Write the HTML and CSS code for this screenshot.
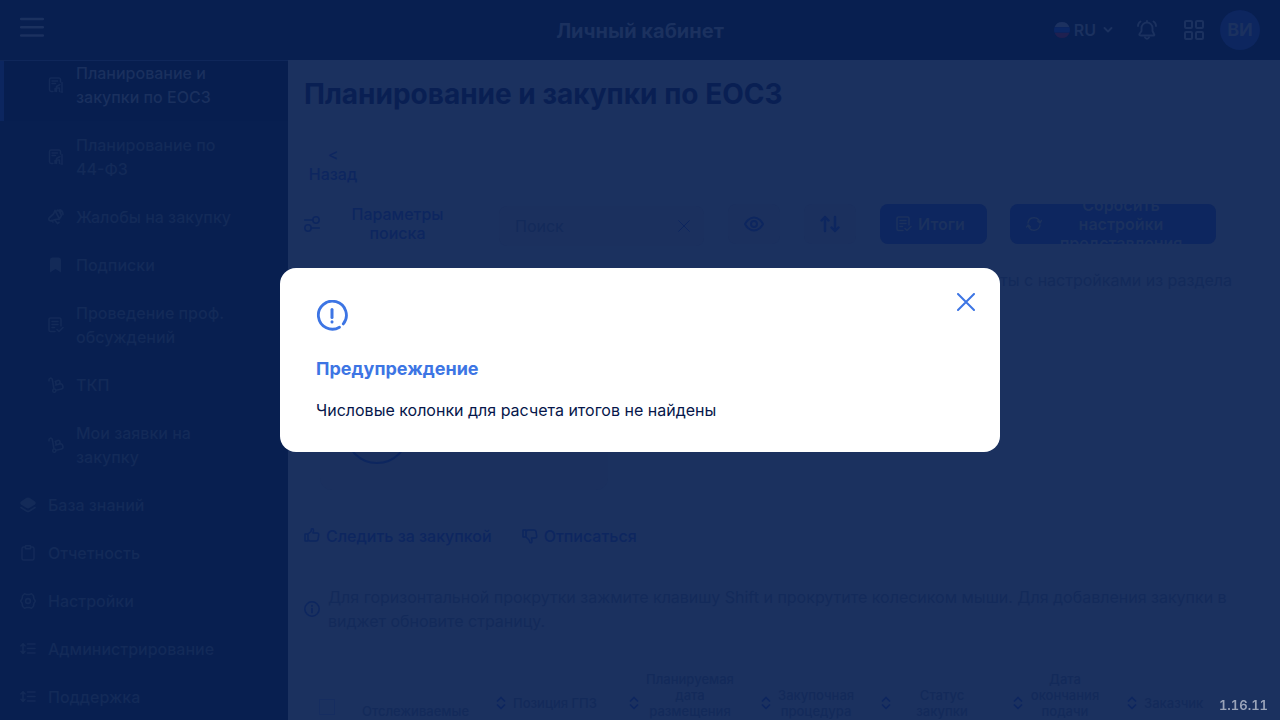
FILE: index.html
```html
<!DOCTYPE html>
<html lang="ru">
<head>
<meta charset="utf-8">
<meta name="viewport" content="width=device-width, initial-scale=1">
<title>Личный кабинет</title>
<link rel="stylesheet" href="styles.css">
</head>
<body>
<svg class="sprite" aria-hidden="true">
  <symbol id="i-plan" viewBox="0 0 16 16"><path d="M5 14.500H3A1.700 1.700 0 0 1 1.500 13V2.500A1.500 1.500 0 0 1 3 1H11A1.500 1.500 0 0 1 12.500 2.500V5M4 4h5.500M4 6.500h3.500M7 14.500V11.500h1.500v3M8.500 11V9.500L12 7.500M11.500 14.500V11M14 5.500v9.500M9.500 11H11M13 15h1.500"/></symbol>
  <symbol id="i-gavel" viewBox="0 0 16 16"><path d="M7 1.500 11.500 10M7 1.500 5.500 5 1.500 8.500q-1.500 1.500 0 3L3 12q4-2 8.500-2M3.500 11.500 5 13M7 11.500l2.500 3 1.500-1M9.500 1q2 0 3 2M12 .8q3 1 3 4.700M8 2l3-.5 2.500 5L12 9" stroke-width="1.700"/></symbol>
  <symbol id="i-mark" viewBox="0 0 16 16"><path class="fill" d="M2 3a2.500 2.500 0 0 1 2.500-2.500h6A2.500 2.500 0 0 1 13 3v12.500l-5.500-3.500L2 15.500z"/></symbol>
  <symbol id="i-check" viewBox="0 0 16 16"><path d="M7 14.500H2.500A1.500 1.500 0 0 1 1 13V2.500A1.500 1.500 0 0 1 2.500 1h9A1.500 1.500 0 0 1 13 2.500V9M4 4.500h6M4 7.500h6M4 10.500h2.500M9 12.500l2 2 4-4" stroke-width="1.600"/></symbol>
  <symbol id="i-cart" viewBox="0 0 16 16"><path d="M1 3.800C.5.800 3.800.300 4.300 2.500L6 12M8 13.200l5.500-1.200q1.700-.3 1.500-2L14.500 8q-.5-1.500-2.500-1L7.500 8M7.300 4.500l2.500-1q2-.5 2.200 1.500T9.500 7.500M7.500 4.500 8.300 8" stroke-width="1.600"/><circle cx="6.300" cy="13.700" r="1.600"/></symbol>
  <symbol id="i-layers" viewBox="0 0 16 16"><path class="fill" d="M6.500.8q1.500-.8 3 0l5.500 3.700q1.500 1.500 0 3L9.500 11q-1.500.8-3 0L1 7.500q-1.500-1.500 0-3z"/><path d="M1 10.500 6.500 14q1.500.8 3 0L15 10.500" stroke-width="1.700"/></symbol>
  <symbol id="i-clip" viewBox="0 0 16 16"><path d="M5 2H3.500A1.500 1.500 0 0 0 2 3.500v10A1.500 1.500 0 0 0 3.500 15h9a1.500 1.500 0 0 0 1.500-1.500v-10A1.500 1.500 0 0 0 12.500 2H11M5.500.8h5v3h-5z"/></symbol>
  <symbol id="i-gear" viewBox="0 0 16 16"><path d="m4.500.8 2 .7h3l2-.7 2 2 .3 2.500 1.500 2.700-1.500 2.700-.3 2.500-2 2-2-.7h-3l-2 .7-2-2-.3-2.500L.7 8l1.500-2.700.3-2.500z" stroke-width="1.600"/><circle cx="8" cy="8" r="2.400" stroke-width="1.600"/></symbol>
  <symbol id="i-lines" viewBox="0 0 16 16"><path d="M3 3v9M1 4.800 3 2.700l2 2.100M1 10.300l2 2.100 2-2.100M7.500 3H15M7.500 7.500H15M7.500 12H15" stroke-width="1.600"/></symbol>
  <symbol id="i-sort" viewBox="0 0 10 14"><path d="M1.500 5 5 1.500 8.500 5M1.500 9 5 12.500 8.500 9" stroke-width="1.700"/></symbol>
  <symbol id="i-x" viewBox="0 0 18 18"><path d="m1 1 16 16M17 1 1 17"/></symbol>
</svg>

<header class="topbar">
  <button class="icon-btn" aria-label="Меню"><svg class="burger" viewBox="0 0 24 20"><path d="M1 2h22M1 10.300h22M1 18.500h22" stroke-width="2.400"/></svg></button>
  <div class="brand">Личный кабинет</div>
  <div class="tools">
    <button class="lang"><svg class="flag" viewBox="0 0 16 16"><path class="flag-white" d="M.5 5.300a8 8 0 0 1 15 0z"/><path class="flag-blue" d="M.5 5.300h15a8 8 0 0 1 0 5.400H.5a8 8 0 0 1 0-5.400"/><path class="flag-red" d="M.5 10.700h15a8 8 0 0 1-15 0"/></svg>RU<svg class="chev" viewBox="0 0 10 6"><path d="M1.500 1 5 4.500 8.500 1" stroke-width="1.900"/></svg></button>
    <button class="icon-btn bell" aria-label="Уведомления"><svg class="i20" viewBox="0 0 20 20"><path d="M10 1v1.500M4 15.500h12.500q1.500 0 .5-1.500l-1.500-3V8a5.500 5.500 0 0 0-11 0v3L2.500 14q-.8 1.500 1.500 1.500M8 17.500q2 2.500 4 0M1 6q0-3 2.500-4.500M19 6q0-3-2.500-4.500" stroke-width="1.900"/></svg></button>
    <button class="icon-btn apps" aria-label="Приложения"><svg class="i20" viewBox="0 0 20 20"><rect x="1" y="1" width="7" height="7" rx="1"/><rect x="12" y="1" width="7" height="7" rx="1"/><rect x="1" y="12" width="7" height="7" rx="1"/><rect x="12" y="12" width="7" height="7" rx="1"/></svg></button>
    <button class="avatar">ВИ</button>
  </div>
</header>

<div class="layout">
  <nav class="sidebar">
    <ul class="menu">
      <li><a class="item sub active" href="#"><svg class="i16"><use href="#i-plan"/></svg><span>Планирование и<br>закупки по ЕОСЗ</span></a></li>
      <li><a class="item sub" href="#"><svg class="i16"><use href="#i-plan"/></svg><span>Планирование по<br>44-ФЗ</span></a></li>
      <li><a class="item sub" href="#"><svg class="i16"><use href="#i-gavel"/></svg><span>Жалобы на закупку</span></a></li>
      <li><a class="item sub" href="#"><svg class="i16"><use href="#i-mark"/></svg><span>Подписки</span></a></li>
      <li><a class="item sub" href="#"><svg class="i16"><use href="#i-check"/></svg><span>Проведение проф.<br>обсуждений</span></a></li>
      <li><a class="item sub" href="#"><svg class="i16"><use href="#i-cart"/></svg><span>ТКП</span></a></li>
      <li><a class="item sub" href="#"><svg class="i16"><use href="#i-cart"/></svg><span>Мои заявки на<br>закупку</span></a></li>
      <li><a class="item" href="#"><svg class="i16"><use href="#i-layers"/></svg><span>База знаний</span></a></li>
      <li><a class="item" href="#"><svg class="i16"><use href="#i-clip"/></svg><span>Отчетность</span></a></li>
      <li><a class="item" href="#"><svg class="i16"><use href="#i-gear"/></svg><span>Настройки</span></a></li>
      <li><a class="item" href="#"><svg class="i16"><use href="#i-lines"/></svg><span>Администрирование</span></a></li>
      <li><a class="item" href="#"><svg class="i16"><use href="#i-lines"/></svg><span>Поддержка</span></a></li>
    </ul>
  </nav>

  <main class="main">
    <h1 class="title">Планирование и закупки по ЕОСЗ</h1>
    <button class="back">&lt;<br>Назад</button>

    <div class="toolbar">
      <button class="params"><svg class="i16" viewBox="0 0 16 16"><circle cx="12" cy="4" r="3.200"/><circle cx="4" cy="12" r="3.200"/><path d="M.5 4h8M7.500 12h8"/></svg><span>Параметры<br>поиска</span></button>
      <div class="search"><input type="text" placeholder="Поиск" aria-label="Поиск"><button class="icon-btn" aria-label="Очистить"><svg class="clear"><use href="#i-x"/></svg></button></div>
      <button class="square" aria-label="Просмотр"><svg class="i20" viewBox="0 0 20 20"><path d="M1 10q1-2 3-4 6-5 12 0 2 2 3 4-1 2-3 4-6 5-12 0-2-2-3-4z" stroke-width="1.900"/><circle cx="10" cy="10" r="3" stroke-width="1.900"/></svg></button>
      <button class="square" aria-label="Сортировка"><svg class="i20" viewBox="0 0 20 20"><path d="M5 17V3M1.500 6.500 5 3l3.500 3.500M15 3v14M11.500 13.500 15 17l3.500-3.500" stroke-width="2.400"/></svg></button>
      <button class="primary totals"><svg class="i16"><use href="#i-check"/></svg><span>Итоги</span></button>
      <button class="primary reset"><svg class="i16" viewBox="0 0 16 16"><path d="M2 7a6 6 0 0 1 11.500-1.500L14 7M14 9a6 6 0 0 1-11.500 1.500L2 9M.5 11 2.500 9l2 2M11.500 5l2.500 2 1.500-2.500"/></svg><span>Сбросить<br>настройки<br>представления</span></button>
    </div>

    <p class="hint">работы с настройками из раздела</p>
    <div class="card"><svg class="ring" viewBox="0 0 64 64"><circle cx="32" cy="32" r="31"/></svg></div>

    <div class="links">
      <button class="link"><svg class="i16" viewBox="0 0 16 16"><path d="M1 6h3v7H1zM4 6l3-2.500L7.500 1Q9.500 0 9.500 2.500L9 5h4q2 0 1.700 2L14 11.500q-.3 1.500-2 1.500H6l-2-1"/></svg>Следить за закупкой</button>
      <button class="link"><svg class="i16" viewBox="0 0 16 16"><path d="M1 2h3v7H1zM4 3l2-1h6q1.700 0 2 1.500L14.700 8q.3 2-1.700 2H9.500l.5 3q0 2.500-2 1.500L7 12 4 9"/></svg>Отписаться</button>
    </div>

    <div class="note">
      <svg class="i16" viewBox="0 0 16 16"><circle cx="8" cy="8" r="7.200"/><path d="M8 7.500v4M8 4.500v.6" stroke-width="1.700"/></svg>
      <p>Для горизонтальной прокрутки зажмите клавишу Shift и прокрутите колесиком мыши. Для добавления закупки в<br>виджет обновите страницу.</p>
    </div>

    <table class="grid">
      <colgroup><col class="c-check"><col class="c-watch"><col class="c-pos"><col class="c-plan"><col class="c-proc"><col class="c-status"><col class="c-end"><col></colgroup>
      <thead><tr>
        <th class="check"><input type="checkbox" aria-label="Выбрать все"></th>
        <th class="low">Отслеживаемые</th>
        <th><div class="head start"><svg><use href="#i-sort"/></svg><span>Позиция ГПЗ</span></div></th>
        <th><div class="head"><svg><use href="#i-sort"/></svg><span class="tall">Планируемая<br>дата<br>размещения</span></div></th>
        <th><div class="head"><svg><use href="#i-sort"/></svg><span>Закупочная<br>процедура</span></div></th>
        <th><div class="head"><svg><use href="#i-sort"/></svg><span>Статус<br>закупки</span></div></th>
        <th><div class="head"><svg><use href="#i-sort"/></svg><span class="tall">Дата<br>окончания<br>подачи</span></div></th>
        <th><div class="head start"><svg><use href="#i-sort"/></svg><span>Заказчик</span></div></th>
      </tr></thead>
    </table>
  </main>
</div>

<div class="layer">
  <section class="modal" role="dialog" aria-modal="true" aria-labelledby="modal-title">
    <svg class="alert" viewBox="0 0 32 32"><path d="M27.300 23.900A14 14 0 1 0 23.500 27.200" stroke-width="2.800"/><path d="M16 9.500V17.500" stroke-width="3"/><path d="M16 21.800v.1" stroke-width="3"/></svg>
    <h2 id="modal-title">Предупреждение</h2>
    <p>Числовые колонки для расчета итогов не найдены</p>
    <button class="close" aria-label="Закрыть"><svg><use href="#i-x"/></svg></button>
  </section>
</div>
<div class="version">1.16.11</div>
</body>
</html>
```
FILE: styles.css
```css
:root {
  --navy: #081f50;
  --surface: #1b315f;
  --blue: #0d265f;
  --muted: #132a5a;
  --accent: #3d75e4;
}

* { box-sizing: border-box; }

body {
  margin: 0;
  height: 100vh;
  overflow: hidden;
  display: flex;
  flex-direction: column;
  background: var(--surface);
  font-family: Inter, "Noto Sans", sans-serif;
  font-size: 16px;
  line-height: 24px;
}

h1, h2, p, ul { margin: 0; padding: 0; }
ul { list-style: none; }
a { color: inherit; text-decoration: none; }
button { font: inherit; color: inherit; background: none; border: 0; padding: 0; }

svg {
  flex: none;
  fill: none;
  stroke: currentColor;
  stroke-width: 1.5;
  stroke-linecap: round;
  stroke-linejoin: round;
}
.fill { fill: currentColor; stroke: none; }
.sprite { position: absolute; width: 0; height: 0; }
.i16 { width: 16px; height: 16px; }
.i20 { width: 20px; height: 20px; }
.icon-btn { display: flex; }

/* Top bar */
.topbar {
  flex: none;
  display: grid;
  grid-template-columns: 1fr auto 1fr;
  align-items: center;
  height: 60px;
  padding: 0 20px;
  background: var(--navy);
  color: var(--surface);
}
.burger { width: 24px; height: 20px; margin-bottom: 6px; }
.brand { padding-top: 2px; font-size: 20px; font-weight: 700; }
.tools { display: flex; align-items: center; justify-content: flex-end; }
.lang { display: flex; align-items: center; gap: 4px; font-weight: 600; }
.flag { width: 16px; height: 16px; stroke: none; }
.flag-white { fill: #1c3160; }
.flag-blue { fill: #0b2663; }
.flag-red { fill: #1f2050; }
.chev { width: 10px; height: 6px; margin-left: 3px; }
.bell { margin-left: 24px; }
.apps { margin-left: 27px; }
.apps svg { stroke-width: 2; }
.avatar {
  width: 40px;
  height: 40px;
  margin-left: 16px;
  border-radius: 50%;
  background: var(--blue);
  font-size: 18px;
  font-weight: 700;
}

/* Layout */
.layout { flex: 1; display: flex; min-height: 0; }
.sidebar {
  flex: none;
  width: 288px;
  overflow: hidden;
  background: var(--navy);
  border-top: 1px solid #0f275a;
  color: #132a58;
}
.menu { margin-top: -12px; }
.item {
  display: flex;
  align-items: center;
  gap: 12px;
  padding: 12px 20px;
  font-weight: 500;
}
.sub { padding-left: 48px; }
.active {
  padding-left: 44px;
  border-left: 4px solid #0c265f;
  background: #071e4f;
  color: #1a305e;
}
.active svg { color: #132a59; }

.main {
  flex: 1;
  min-width: 0;
  overflow: hidden;
  padding: 16px 48px 0 16px;
  color: var(--muted);
}
.title { font-size: 28px; line-height: 36px; font-weight: 700; color: #091f53; }
.back {
  display: block;
  width: 58px;
  margin-top: 32px;
  line-height: 20px;
  font-weight: 500;
  color: var(--blue);
}

.toolbar { display: flex; align-items: center; height: 40px; margin-top: 20px; color: var(--blue); }
.params {
  flex: none;
  display: flex;
  align-items: center;
  width: 171px;
  line-height: 19px;
  font-weight: 500;
}
.params span { flex: 1; }
.search {
  flex: 1 1 0;
  min-width: 0;
  display: flex;
  align-items: center;
  height: 40px;
  margin: 4px 24px 0;
  padding: 0 14px 0 16px;
  border-radius: 8px;
  background: #1b305e;
}
.search input {
  flex: 1;
  min-width: 0;
  padding: 0;
  border: 0;
  outline: 0;
  background: none;
  font: inherit;
}
.search input::placeholder { color: var(--muted); opacity: 1; }
.clear { width: 12px; height: 12px; }
.clear, .close svg { overflow: visible; }
.square {
  flex: none;
  display: flex;
  align-items: center;
  justify-content: center;
  width: 52px;
  height: 40px;
  margin-right: 24px;
  border-radius: 8px;
  background: #1b305e;
}
.primary {
  flex: none;
  display: flex;
  align-items: center;
  height: 40px;
  padding: 0 16px;
  overflow: hidden;
  border-radius: 8px;
  background: var(--blue);
  color: #1b315e;
  line-height: 19px;
  font-weight: 600;
}
.primary span { flex: 1; }
.totals { width: 107px; margin-right: 23px; }
.reset { width: 206px; margin-right: 16px; }

.hint { margin: 24px 0 0; text-align: right; }
.card {
  width: 288px;
  height: 102px;
  margin: 96px 0 0 16px;
  padding: 12px 25px;
  border-radius: 12px;
  background: #1b305e;
}
.ring { width: 64px; height: 64px; stroke: var(--blue); stroke-width: 2; }

.links { display: flex; gap: 30px; margin-top: 34px; color: var(--blue); }
.link { display: flex; align-items: center; gap: 6px; font-weight: 500; }
.note { display: flex; align-items: center; gap: 8px; margin-top: 37px; }
.note svg { color: var(--blue); }
.note p { white-space: nowrap; }

/* Table */
.grid {
  width: 100%;
  margin-top: 38px;
  table-layout: fixed;
  border-collapse: collapse;
  font-size: 13px;
  line-height: 16px;
}
.grid th { height: 64px; padding: 0; font-weight: 500; }
.grid .check { padding: 8px 0 0 15px; text-align: left; }
.grid .low { padding-top: 16px; }
.c-check { width: 31px; }
.c-watch { width: 161px; }
.c-pos { width: 133px; }
.c-plan { width: 132px; }
.c-proc { width: 120px; }
.c-status { width: 132px; }
.c-end { width: 114px; }
.check input {
  appearance: none;
  display: block;
  width: 16px;
  height: 16px;
  margin: 0;
  border: 1px solid #162d60;
}
.head { display: flex; align-items: center; gap: 7px; padding-right: 27px; }
.head svg { width: 10px; height: 14px; color: var(--blue); }
.head span { flex: 1; white-space: nowrap; }
.head .tall { padding-bottom: 16px; }
.start { padding-right: 0; text-align: left; }

/* Dialog */
.layer {
  position: fixed;
  inset: 0;
  display: flex;
  align-items: center;
  justify-content: center;
}
.modal {
  position: relative;
  width: 720px;
  max-width: 100%;
  padding: 32px 36px 30px;
  border-radius: 16px;
  background: #fff;
  color: #06164a;
}
.alert { display: block; width: 32px; height: 32px; color: var(--accent); }
.modal h2 { margin: 25px 0 17px; font-size: 18px; line-height: 24px; color: var(--accent); }
.close { position: absolute; top: 25px; right: 25px; color: var(--accent); }
.close svg { display: block; width: 18px; height: 18px; stroke-width: 2; }

.version {
  position: fixed;
  right: 12px;
  bottom: 7px;
  font-size: 13px;
  line-height: 16px;
  font-weight: 600;
  font-variant-numeric: tabular-nums;
  color: #9aa4ba;
}
```
